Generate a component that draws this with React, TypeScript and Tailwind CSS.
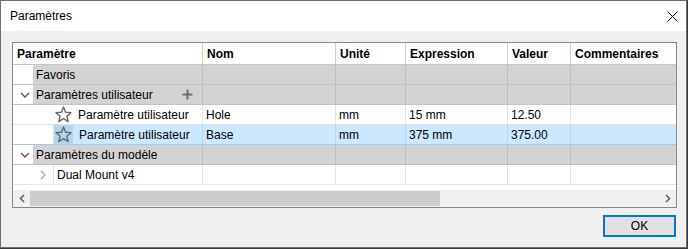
import { ReactNode } from 'react';

const cols = [190, 133, 70, 102, 63, 130];

function ChevronDown() {
  return (
    <svg width="10" height="6" viewBox="0 0 10 6" className="block">
      <polyline points="1,1 5,5 9,1" fill="none" stroke="#555" strokeWidth="1.3" />
    </svg>
  );
}

function Star({ selected }: { selected?: boolean }) {
  return (
    <div className={`w-[19px] h-[19px] flex items-center justify-center ${selected ? 'bg-[#b4d4ee]' : ''}`}>
      <svg width="17" height="17" viewBox="0 0 17 17" className="block">
        <polygon
          points="8.5,1 10.6,6.2 16,6.6 11.9,10.2 13.2,15.6 8.5,12.7 3.8,15.6 5.1,10.2 1,6.6 6.4,6.2"
          fill="none"
          stroke="#6a6a6a"
          strokeWidth="1.4"
          strokeLinejoin="round"
        />
      </svg>
    </div>
  );
}

function Cells({ values, line, bg }: { values: ReactNode[]; line: string; bg: string }) {
  return (
    <>
      {values.map((v, i) => (
        <div
          key={i}
          style={{ width: cols[i + 1] }}
          className={`shrink-0 h-full flex items-center pl-[3px] border-r ${line} ${bg}`}
        >
          {v}
        </div>
      ))}
    </>
  );
}

function GroupRow({ label, chevron, plus }: { label: string; chevron?: boolean; plus?: boolean }) {
  return (
    <div className="flex h-[20px] border-b border-[#c4c4c4]">
      <div className="w-[20px] shrink-0 bg-white flex items-center justify-center pl-[4px]">
        {chevron && <ChevronDown />}
      </div>
      <div className="w-[170px] shrink-0 bg-[#d3d3d3] flex items-center pl-[3px] border-r border-[#bdbdbd] relative">
        <span>{label}</span>
        {plus && (
          <svg width="11" height="11" viewBox="0 0 11 11" className="absolute left-[149px] top-[4px]">
            <path d="M5.5 0.5V10.5M0.5 5.5H10.5" stroke="#6f6f6f" strokeWidth="2" />
          </svg>
        )}
      </div>
      <Cells values={['', '', '', '', '']} line="border-[#bdbdbd]" bg="bg-[#d3d3d3]" />
    </div>
  );
}

export default function App() {
  const rows = [
    { nom: 'Hole', expr: '15 mm', value: '12.50', selected: false },
    { nom: 'Base', expr: '375 mm', value: '375.00', selected: true },
  ];

  return (
    <div
      className="w-[688px] h-[249px] bg-[#3a3a3a] text-[12px] text-black leading-none"
      style={{ fontFamily: '"Liberation Sans", Arial, sans-serif' }}
    >
      <div className="w-[687px] h-[248px] border border-[#6e6e6e] bg-[#f0f0f0] flex flex-col">
        <div className="h-[30px] bg-white flex items-center justify-between pl-[9px] pr-[8px] shrink-0">
          <span>Paramètres</span>
          <svg width="11" height="11" viewBox="0 0 11 11" className="block">
            <path d="M0.5 0.5L10.5 10.5M10.5 0.5L0.5 10.5" stroke="#111" strokeWidth="1" />
          </svg>
        </div>

        <div className="ml-[11px] mt-[11px] w-[665px] h-[166px] border border-[#828790] bg-white overflow-hidden flex flex-col">
          <div className="flex h-[22px] border-b border-[#c6c6c6] font-bold shrink-0">
            {['Paramètre', 'Nom', 'Unité', 'Expression', 'Valeur', 'Commentaires'].map((h, i) => (
              <div
                key={h}
                style={{ width: cols[i] }}
                className="shrink-0 h-full flex items-center border-r border-[#d0d0d0] pl-[4px]"
              >
                {h}
              </div>
            ))}
          </div>

          <GroupRow label="Favoris" />
          <GroupRow label="Paramètres utilisateur" chevron plus />

          {rows.map(r => {
            const bg = r.selected ? 'bg-[#cce8ff]' : 'bg-white';
            const line = r.selected ? 'border-[#b8d6ef]' : 'border-[#e3e3e3]';
            return (
              <div key={r.nom} className={`flex h-[20px] border-b ${r.selected ? 'border-[#a9c9e6]' : 'border-[#d6e2ec]'}`}>
                <div className="w-[40px] shrink-0 bg-white" />
                <div className={`w-[150px] shrink-0 flex items-center border-r ${line} ${bg}`}>
                  <div className="pl-[1px]">
                    <Star selected={r.selected} />
                  </div>
                  <span className={r.selected ? 'ml-[6px]' : 'ml-[5px]'}>Paramètre utilisateur</span>
                </div>
                <Cells values={[r.nom, 'mm', r.expr, r.value, '']} line={line} bg={bg} />
              </div>
            );
          })}

          <GroupRow label="Paramètres du modèle" chevron />

          <div className="flex h-[20px] border-b border-[#e3e3e3]">
            <div className="w-[40px] shrink-0 bg-white flex items-center justify-end pr-[7px]">
              <svg width="6" height="10" viewBox="0 0 6 10" className="block">
                <polyline points="1,1 5,5 1,9" fill="none" stroke="#a6a6a6" strokeWidth="1.3" />
              </svg>
            </div>
            <div className="w-[150px] shrink-0 flex items-center border-r border-l border-[#e3e3e3] pl-[3px]">
              Dual Mount v4
            </div>
            <Cells values={['', '', '', '', '']} line="border-[#e3e3e3]" bg="bg-white" />
          </div>

          <div className="flex-1" />

          <div className="h-[17px] shrink-0 bg-[#f0f0f0] flex items-center">
            <div className="w-[17px] h-full flex items-center justify-center">
              <svg width="6" height="9" viewBox="0 0 6 9" className="block">
                <polyline points="5,1 1.5,4.5 5,8" fill="none" stroke="#606060" strokeWidth="1.6" />
              </svg>
            </div>
            <div className="w-[410px] h-[15px] bg-[#cdcdcd]" />
            <div className="flex-1" />
            <div className="w-[17px] h-full flex items-center justify-center">
              <svg width="6" height="9" viewBox="0 0 6 9" className="block">
                <polyline points="1,1 4.5,4.5 1,8" fill="none" stroke="#606060" strokeWidth="1.6" />
              </svg>
            </div>
          </div>
        </div>

        <div className="flex justify-end pr-[10px] mt-[7px]">
          <button className="w-[73px] h-[22px] border-2 border-[#0078d7] bg-[#e1e1e1] flex items-center justify-center">
            OK
          </button>
        </div>
      </div>
    </div>
  );
}
